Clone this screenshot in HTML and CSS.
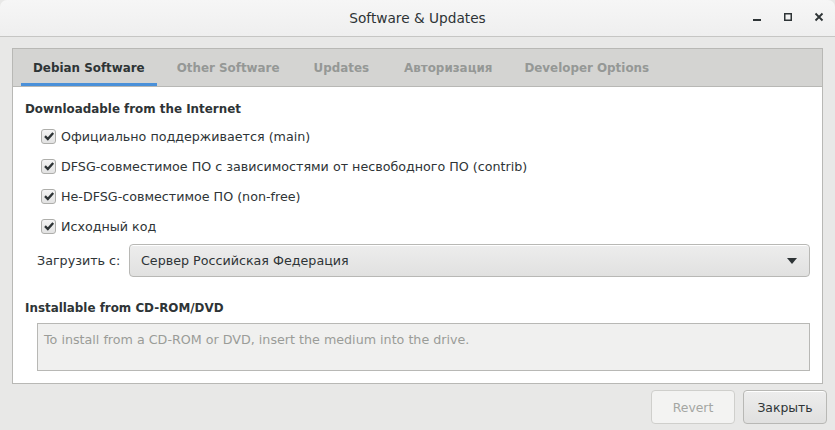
FILE: index.html
```html
<!DOCTYPE html>
<html>
<head>
<meta charset="utf-8">
<link rel="stylesheet" href="styles.css">
</head>
<body>
<div class="window">
  <div class="titlebar">
    <div class="title">Software &amp; Updates</div>
    <div class="controls">
      <svg class="ctl" width="16" height="16" viewBox="0 0 16 16"><rect x="4" y="10" width="8" height="2" fill="#2e3436"/></svg>
      <svg class="ctl" width="16" height="16" viewBox="0 0 16 16"><rect x="4.75" y="4.75" width="6.5" height="6.5" fill="none" stroke="#2e3436" stroke-width="1.5"/></svg>
      <svg class="ctl" width="16" height="16" viewBox="0 0 16 16"><path d="M4.5 4.5 L11.5 11.5 M11.5 4.5 L4.5 11.5" stroke="#2e3436" stroke-width="1.8"/></svg>
    </div>
  </div>
  <div class="main">
    <div class="notebook">
      <div class="tabs">
        <div class="tab active">Debian Software</div>
        <div class="tab">Other Software</div>
        <div class="tab">Updates</div>
        <div class="tab">Авторизация</div>
        <div class="tab">Developer Options</div>
      </div>
      <div class="page">
        <div class="heading">Downloadable from the Internet</div>
        <div class="checks">
          <label class="check"><span class="box"><svg width="12" height="12" viewBox="0 0 12 12"><path d="M2 6.2 L4.8 9 L10.2 3" fill="none" stroke="#2e3436" stroke-width="2.4"/></svg></span>Официально поддерживается (main)</label>
          <label class="check"><span class="box"><svg width="12" height="12" viewBox="0 0 12 12"><path d="M2 6.2 L4.8 9 L10.2 3" fill="none" stroke="#2e3436" stroke-width="2.4"/></svg></span>DFSG-совместимое ПО с зависимостями от несвободного ПО (contrib)</label>
          <label class="check"><span class="box"><svg width="12" height="12" viewBox="0 0 12 12"><path d="M2 6.2 L4.8 9 L10.2 3" fill="none" stroke="#2e3436" stroke-width="2.4"/></svg></span>Не-DFSG-совместимое ПО (non-free)</label>
          <label class="check"><span class="box"><svg width="12" height="12" viewBox="0 0 12 12"><path d="M2 6.2 L4.8 9 L10.2 3" fill="none" stroke="#2e3436" stroke-width="2.4"/></svg></span>Исходный код</label>
        </div>
        <div class="source">
          <span class="src-label">Загрузить с:</span>
          <div class="combo"><span>Сервер Российская Федерация</span><span class="arrow"></span></div>
        </div>
        <div class="heading h2">Installable from CD-ROM/DVD</div>
        <div class="cdbox">To install from a CD-ROM or DVD, insert the medium into the drive.</div>
      </div>
    </div>
    <div class="buttons">
      <button class="btn disabled">Revert</button>
      <button class="btn">Закрыть</button>
    </div>
  </div>
</div>
</body>
</html>
```
FILE: styles.css
```css
* { box-sizing: border-box; }
html, body { margin: 0; padding: 0; }
body {
  width: 835px;
  height: 430px;
  overflow: hidden;
  background: #e8e8e7;
  font-family: "DejaVu Sans", sans-serif;
  font-size: 12.7px;
  color: #2e3436;
}
.window { width: 835px; height: 430px; display: flex; flex-direction: column; }
.titlebar {
  height: 37px;
  flex: none;
  background: linear-gradient(#f6f6f6, #efefef);
  border-bottom: 1px solid #c6c6c4;
  border-radius: 7px 7px 0 0;
  display: flex;
  align-items: center;
  justify-content: center;
  position: relative;
}
.title { font-size: 13.7px; color: #2e3436; }
.controls {
  position: absolute;
  right: 8px;
  top: 9px;
  display: flex;
  gap: 15px;
}
.ctl { display: block; }
.main { padding: 11px 12px 0 12px; flex: 1; display: flex; flex-direction: column; }
.notebook {
  height: 336px;
  border: 1px solid #b8b8b5;
  background: #fff;
  display: flex;
  flex-direction: column;
}
.tabs {
  height: 38px;
  flex: none;
  background: #d4d4d2;
  border-bottom: 1px solid #b8b8b5;
  display: flex;
  padding-left: 4px;
}
.tab {
  margin: 0 4px;
  padding: 0 12px;
  display: flex;
  align-items: center;
  font-weight: bold;
  color: #959896;
  font-size: 11.9px;
  border-bottom: 3px solid transparent;
  padding-top: 3px;
}
.tab:nth-child(3) { margin-left: 6px; }
.tab:nth-child(4) { margin-left: 7px; }
.tab.active { color: #2e3436; border-bottom-color: #4a90d9; }
.page { padding: 13px 12px 0 12px; display: flex; flex-direction: column; }
.heading { font-weight: bold; font-size: 11.9px; height: 18px; line-height: 18px; }
.checks { display: flex; flex-direction: column; margin-top: 3px; padding-left: 16px; }
.check { height: 30px; display: flex; align-items: center; }
.box {
  width: 15px; height: 15px;
  border: 1px solid #aeaeab;
  border-radius: 3px;
  background: linear-gradient(#f4f4f4, #e2e2e2);
  display: flex; align-items: center; justify-content: center;
  margin-right: 5px;
}
.box svg { display: block; }
.source { display: flex; align-items: center; margin-top: 3px; padding-left: 12px; }
.src-label { width: 92px; }
.combo {
  flex: 1;
  height: 33px;
  border: 1px solid #b8b8b5;
  border-radius: 4px;
  background: linear-gradient(#ededed, #e1e1e0);
  display: flex; align-items: center; justify-content: space-between;
  padding: 0 12px 0 11px;
  box-shadow: inset 0 1px #fff;
}
.arrow {
  width: 0; height: 0;
  border-left: 5px solid transparent;
  border-right: 5px solid transparent;
  border-top: 6px solid #2e3436;
}
.h2 { margin-top: 22px; }
.cdbox {
  margin: 6px 0 0 12px;
  height: 48px;
  background: #f0f0ef;
  border: 1px solid #b8b8b5;
  color: #9a9c98;
  padding: 8px 6px;
}
.buttons { display: flex; justify-content: flex-end; gap: 8px; margin-top: 6px; margin-right: -4px; }
.btn {
  width: 84px; height: 34px;
  font-family: "DejaVu Sans", sans-serif;
  font-size: 12.4px;
  color: #2e3436;
  border: 1px solid #b8b8b5;
  border-radius: 4px;
  background: linear-gradient(#ededed, #e0e0df);
  box-shadow: inset 0 1px #fff;
}
.btn.disabled { background: #f3f3f2; border-color: #cfcfcc; color: #a4a6a2; box-shadow: none; }
```
